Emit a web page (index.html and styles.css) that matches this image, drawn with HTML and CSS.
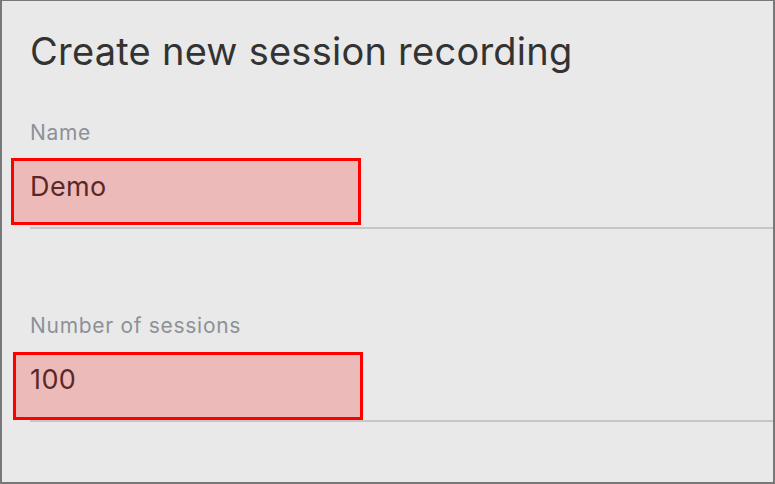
FILE: index.html
```html
<!DOCTYPE html>
<html lang="en">
<head>
<meta charset="utf-8">
<title>Create new session recording</title>
<link rel="stylesheet" href="styles.css">
</head>
<body>
<div class="frame">
  <h1 class="title">Create new session recording</h1>
  <div class="field field-first">
    <div class="label">Name</div>
    <div class="control">
      <div class="value">Demo</div>
      <div class="highlight hl-1"></div>
    </div>
  </div>
  <div class="field field-second">
    <div class="label">Number of sessions</div>
    <div class="control">
      <div class="value">100</div>
      <div class="highlight hl-2"></div>
    </div>
  </div>
</div>
</body>
</html>
```

FILE: styles.css
```css
html, body {
  margin: 0;
  padding: 0;
  background: #e9e9e9;
}

.frame {
  width: 775px;
  height: 484px;
  box-sizing: border-box;
  border: 2px solid #787878;
  border-top-width: 1px;
  background: #e9e9e9;
  padding-left: 28px;
  font-family: Inter, "Liberation Sans", Arial, sans-serif;
  overflow: hidden;
}

.title {
  margin: 31px 0 0 0;
  font-size: 38px;
  line-height: 39px;
  font-weight: 400;
  letter-spacing: 0.25px;
  color: #333333;
}

.field-first {
  margin-top: 51px;
}

.field-second {
  margin-top: 86px;
}

.label {
  font-size: 21px;
  line-height: 21px;
  letter-spacing: 0.7px;
  color: #8d9198;
}

.control {
  position: relative;
  padding: 30px 0 27px 0;
  border-bottom: 2px solid #c6c6c6;
}

.value {
  font-size: 27px;
  line-height: 27px;
  letter-spacing: 0.4px;
  color: #333333;
}

.highlight {
  position: absolute;
  box-sizing: border-box;
  width: 350px;
  height: 67px;
  border: 3px solid #ff0000;
  background: rgba(255, 0, 0, 0.2);
}

.hl-1 {
  left: -19px;
  top: 15px;
}

.hl-2 {
  left: -17px;
  top: 16px;
  height: 68px;
}
```
